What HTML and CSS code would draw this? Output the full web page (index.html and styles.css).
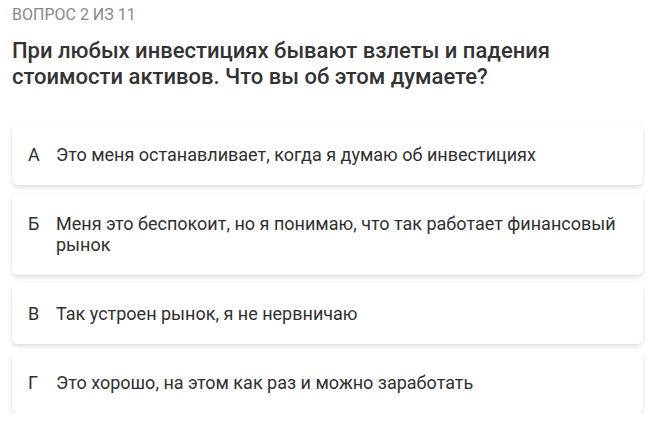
FILE: index.html
```html
<!DOCTYPE html>
<html lang="ru">

<head>
    <meta charset="UTF-8">
    <meta name="viewport" content="width=device-width, initial-scale=1.0">
    <title>Вопрос 2 из 11</title>
    <link rel="stylesheet" href="styles.css">
</head>

<body>
    <div class="quiz">
        <div class="quiz-step">Вопрос 2 из 11</div>

        <h1 class="quiz-question">При любых инвестициях бывают взлеты и падения стоимости активов. Что вы об этом думаете?</h1>

        <div class="answers">
            <div class="answer">
                <span class="answer-letter">А</span>
                <span class="answer-text">Это меня останавливает, когда я думаю об инвестициях</span>
            </div>
            <div class="answer">
                <span class="answer-letter">Б</span>
                <span class="answer-text">Меня это беспокоит, но я понимаю, что так работает финансовый рынок</span>
            </div>
            <div class="answer">
                <span class="answer-letter">В</span>
                <span class="answer-text">Так устроен рынок, я не нервничаю</span>
            </div>
            <div class="answer">
                <span class="answer-letter">Г</span>
                <span class="answer-text">Это хорошо, на этом как раз и можно заработать</span>
            </div>
        </div>
    </div>
</body>

</html>
```

FILE: styles.css
```css
body {
    margin: 0;
    font-family: Roboto, "Noto Sans", sans-serif;
    color: #333;
    background-color: #fff;
}

.quiz {
    padding: 5px 7px 0 12px;
}

.quiz-step {
    text-transform: uppercase;
    font-size: 16px;
    line-height: 20px;
    color: #888;
}

.quiz-question {
    margin: 13px 0 34px;
    font-size: 22px;
    font-weight: 500;
    line-height: 26px;
    color: #333;
}

.answers {
    display: flex;
    flex-direction: column;
    gap: 8px;
}

.answer {
    display: flex;
    padding: 20px 16px;
    background-color: #fff;
    border-radius: 5px;
    box-shadow: 0 3px 4px rgba(0, 0, 0, 0.1), 0 0 3px rgba(0, 0, 0, 0.06);
    font-size: 18px;
    line-height: 21px;
    color: #2f2f2f;
    cursor: pointer;
}

.answer-letter {
    flex: 0 0 28px;
}
```
